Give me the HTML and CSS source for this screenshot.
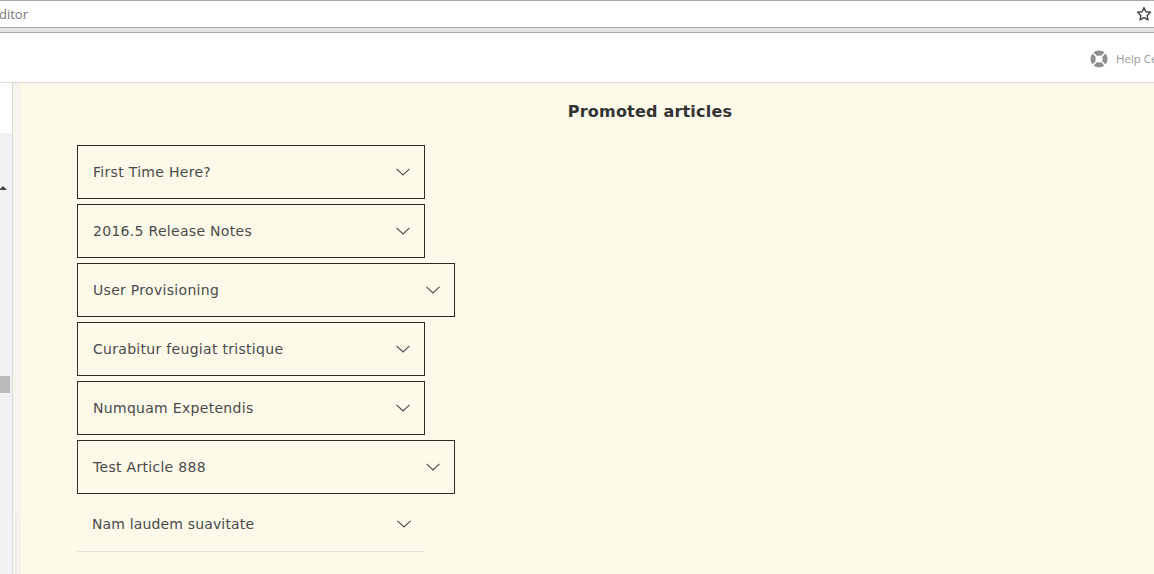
FILE: index.html
```html
<!DOCTYPE html>
<html lang="en">

<head>
    <meta charset="UTF-8">
    <meta name="viewport" content="width=device-width, initial-scale=1.0">
    <title>Promoted articles</title>
    <link rel="stylesheet" href="styles.css">
</head>

<body>
    <!-- Browser address bar -->
    <div class="address-bar">
        <span class="address-text">ditor</span>
        <svg class="star" width="16" height="16" viewBox="0 0 16 16">
            <path d="M8 1.6l1.9 4.2 4.6.5-3.4 3.1.9 4.5L8 11.6l-4 2.3.9-4.5L1.500 6.300l4.600-.5z" fill="none" stroke="#444" stroke-width="1.400" stroke-linejoin="round"/>
        </svg>
    </div>

    <div class="top-nav">
        <svg class="help-icon" width="18" height="18" viewBox="0 0 18 18">
            <circle cx="9" cy="9" r="8.500" fill="#8f8f8f"/>
            <path d="M2.500 2.500l13 13M15.500 2.500l-13 13" stroke="#fff" stroke-width="1.600"/>
            <circle cx="9" cy="9" r="3.600" fill="#fff"/>
        </svg>
        <span class="help-text">Help Center</span>
    </div>

    <div class="main">
        <div class="side-panel">
            <div class="side-top"></div>
            <div class="side-track">
                <div class="scroll-arrow"></div>
                <div class="scroll-thumb"></div>
            </div>
        </div>
        <div class="side-strip">
            <div class="side-strip-mark"></div>
        </div>

        <div class="content">
            <h2 class="section-title">Promoted articles</h2>
            <div class="article-list">
                <div class="article">
                    <span>First Time Here?</span>
                    <svg class="chevron" width="14" height="8" viewBox="0 0 14 8"><path d="M.5.8L7 7 13.500.8" fill="none" stroke="#4a4a4a" stroke-width="1.100"/></svg>
                </div>
                <div class="article">
                    <span>2016.5 Release Notes</span>
                    <svg class="chevron" width="14" height="8" viewBox="0 0 14 8"><path d="M.5.8L7 7 13.500.8" fill="none" stroke="#4a4a4a" stroke-width="1.100"/></svg>
                </div>
                <div class="article wide">
                    <span>User Provisioning</span>
                    <svg class="chevron" width="14" height="8" viewBox="0 0 14 8"><path d="M.5.8L7 7 13.500.8" fill="none" stroke="#4a4a4a" stroke-width="1.100"/></svg>
                </div>
                <div class="article">
                    <span>Curabitur feugiat tristique</span>
                    <svg class="chevron" width="14" height="8" viewBox="0 0 14 8"><path d="M.5.8L7 7 13.500.8" fill="none" stroke="#4a4a4a" stroke-width="1.100"/></svg>
                </div>
                <div class="article">
                    <span>Numquam Expetendis</span>
                    <svg class="chevron" width="14" height="8" viewBox="0 0 14 8"><path d="M.5.8L7 7 13.500.8" fill="none" stroke="#4a4a4a" stroke-width="1.100"/></svg>
                </div>
                <div class="article wide">
                    <span>Test Article 888</span>
                    <svg class="chevron" width="14" height="8" viewBox="0 0 14 8"><path d="M.5.8L7 7 13.500.8" fill="none" stroke="#4a4a4a" stroke-width="1.100"/></svg>
                </div>
                <div class="article plain">
                    <span>Nam laudem suavitate</span>
                    <svg class="chevron" width="14" height="8" viewBox="0 0 14 8"><path d="M.5.8L7 7 13.500.8" fill="none" stroke="#4a4a4a" stroke-width="1.100"/></svg>
                </div>
            </div>
        </div>
    </div>
</body>

</html>
```

FILE: styles.css
```css
html,
body {
    height: 100%;
}

body {
    margin: 0;
    overflow: hidden;
    font-family: 'DejaVu Sans', sans-serif;
    background-color: #fff;
    display: flex;
    flex-direction: column;
}

.address-bar {
    height: 28px;
    box-sizing: border-box;
    flex: none;
    border-top: 1px solid #a8a8a8;
    border-bottom: 1px solid #a8a8a8;
    display: flex;
    align-items: center;
    justify-content: space-between;
    padding: 0 2px 0 0;
    background: #fff;
}

.address-text {
    font-family: 'Open Sans', sans-serif;
    font-size: 13px;
    color: #757575;
    margin-left: -1px;
}

.star {
    display: block;
}

.top-nav {
    height: 51px;
    box-sizing: border-box;
    flex: none;
    background: #fff;
    border-top: 1px solid #a8a8a8;
    margin-top: 4px;
    border-bottom: 1px solid #dedcd4;
    display: flex;
    align-items: center;
    justify-content: flex-end;
    overflow: hidden;
    box-shadow: 0 -4px 0 #e4e4e4;
    padding-top: 2px;
}

.help-icon {
    flex: none;
    margin-right: 8px;
}

.help-text {
    flex: none;
    width: 38px;
    overflow: hidden;
    white-space: nowrap;
    font-family: 'Open Sans', sans-serif;
    font-size: 11.5px;
    color: #999;
}

.main {
    flex: 1;
    display: flex;
    min-height: 0;
}

.side-panel {
    width: 13px;
    box-sizing: border-box;
    flex: none;
    border-right: 1px solid #dcdcdc;
    display: flex;
    flex-direction: column;
}

.side-top {
    height: 50px;
    background: #fff;
    flex: none;
}

.side-track {
    flex: 1;
    background: #f1f1f4;
    padding-top: 53px;
}

.scroll-arrow {
    width: 0;
    height: 0;
    margin-left: -1px;
    border-left: 4px solid transparent;
    border-right: 4px solid transparent;
    border-bottom: 4px solid #444;
}

.scroll-thumb {
    width: 10px;
    height: 17px;
    margin-top: 186px;
    background: #bcbcbc;
}

.side-strip {
    width: 8px;
    flex: none;
    background: #f6f4ec;
    display: flex;
    flex-direction: column;
    justify-content: flex-end;
}

.side-strip-mark {
    width: 2px;
    height: 59px;
    margin-left: 2px;
    background: #ecebe4;
}

.content {
    flex: 1;
    background: #fefaea;
    padding: 0 0 0 56px;
    min-width: 0;
}

.section-title {
    margin: 0;
    padding: 17px 0 0 69px;
    height: 46px;
    box-sizing: border-box;
    text-align: center;
    font-size: 16px;
    letter-spacing: 0.2px;
    line-height: 24px;
    font-weight: bold;
    color: #333;
}

.article-list {
    display: flex;
    flex-direction: column;
    gap: 5px;
    margin-top: 16px;
}

.article {
    width: 348px;
    height: 54px;
    box-sizing: border-box;
    border: 1px solid #2f2b26;
    padding: 0 14px 0 15px;
    display: flex;
    align-items: center;
    justify-content: space-between;
    font-size: 14px;
    color: #4a4a4a;
    letter-spacing: 0.3px;
}

.article.wide {
    width: 378px;
}

.article.plain {
    height: 53px;
    border: none;
    border-bottom: 1px solid #e4e1da;
    padding: 0 14px 2px 15px;
    letter-spacing: 0.15px;
}

.chevron {
    flex: none;
    display: block;
}
```
